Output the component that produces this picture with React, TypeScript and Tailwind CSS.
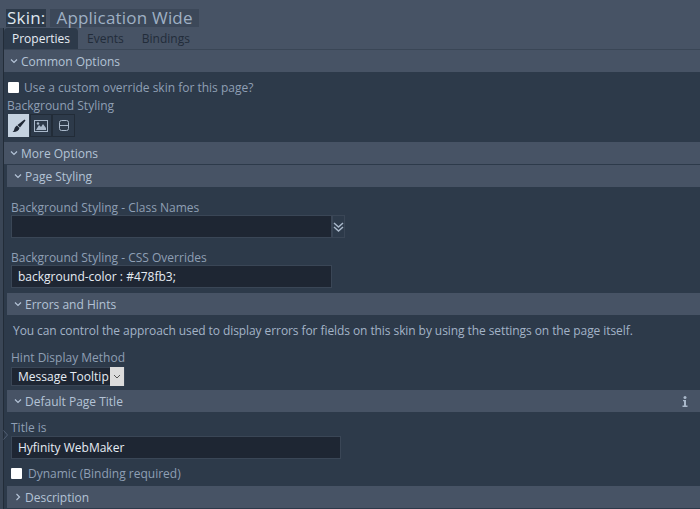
import React from "react";

const font = { fontFamily: '"Open Sans", sans-serif' };

function Chevron({ open = true }: { open?: boolean }) {
  return (
    <svg width="8" height="8" viewBox="0 0 8 8" fill="none" stroke="#b4c3d6" strokeWidth="1.2" className="shrink-0">
      {open ? <path d="M1 2.5 L4 5.5 L7 2.5" /> : <path d="M2.5 1 L5.5 4 L2.5 7" />}
    </svg>
  );
}

function SectionHead({ title, open = true, indent = false, children }: { title: string; open?: boolean; indent?: boolean; children?: React.ReactNode }) {
  return (
    <div className={`flex h-[22px] items-center gap-[3px] bg-[#475365] text-[12px] text-[#b4c3d6] ${indent ? "pl-[7px]" : "pl-[6px]"}`}>
      <Chevron open={open} />
      <span className="relative top-[1px]">{title}</span>
      {children}
    </div>
  );
}

function Label({ children, shift = false }: { children: React.ReactNode; shift?: boolean }) {
  return <div className={`h-[16px] text-[12px] leading-[16px] text-[#8f9fb4] ${shift ? "pt-[1px]" : ""}`}>{children}</div>;
}

export default function App() {
  return (
    <div className="relative flex h-[509px] w-[700px] overflow-hidden bg-[#2d3a4a]" style={font}>
      <div className="flex w-[4px] shrink-0 flex-col">
        <div className="h-[28px] bg-[#475365]" />
        <div className="flex-1 border-r border-[#222c38] bg-[#3a4656]" />
      </div>
      <div className="min-w-0 flex-1">
        {/* header */}
        <div className="h-[50px] border-b border-[#3a4656] bg-[#475365]">
          <div className="flex h-[28px] items-end pb-[1px]">
            <span className="ml-[2px] h-[18px] bg-[#2d3a4a] px-[1px] text-[17px] leading-[18px] tracking-[0.2px] text-[#dfe6ee]">Skin:</span>
            <span className="ml-[4px] h-[18px] bg-[#3c4859] px-[6px] text-[17px] leading-[18px] tracking-[0.2px] text-[#9fb0c4]">Application Wide</span>
          </div>
          <div className="flex h-[21px] text-[12px]">
            <div className="flex w-[74px] items-center justify-center rounded-t-[4px] bg-[#2d3a4a] text-[#e6ecf3]">Properties</div>
            <div className="ml-[9px] flex items-center text-[#222c3a]">Events</div>
            <div className="ml-[18px] flex items-center text-[#222c3a]">Bindings</div>
          </div>
        </div>

        <SectionHead title="Common Options" />
        <div className="h-[70px] bg-[#2d3a4a] pl-[3px] pt-[9px]">
          <label className="flex h-[13px] items-center gap-[5px] pl-[1px] text-[12px] text-[#8f9fb4]">
            <span className="h-[11px] w-[11px] rounded-[1px] bg-white" />
            Use a custom override skin for this page?
          </label>
          <div className="mt-[4px]"><Label>Background Styling</Label></div>
          <div className="flex pl-[1px]">
            <div className="flex h-[23px] w-[21px] items-center justify-center bg-[#c5d2e0]">
              <svg width="14" height="14" viewBox="0 0 14 14" fill="#1f2835"><path d="M12.5 0.5 L13.5 1.5 L8 8.5 L5.5 6 Z" /><path d="M5 6.5 L7.5 9 C7 12 3.5 13.5 0.5 13 C2 12 2 11 2.5 9.5 C3 8 4 7 5 6.5 Z" /></svg>
            </div>
            <div className="ml-[1px] flex h-[23px] w-[22px] items-center justify-center border border-[#222c38] bg-[#2d3a4a]">
              <svg width="14" height="12" viewBox="0 0 14 12" fill="#a9b8ca"><path fillRule="evenodd" d="M0 0 H14 V12 H0 Z M1 1 V11 H13 V1 Z" /><path d="M2 10 L5 5 L7 7 L9 4 L12 8 V10 Z" /><circle cx="4" cy="3.5" r="1.2" /></svg>
            </div>
            <div className="flex h-[23px] w-[23px] items-center justify-center border border-[#222c38] bg-[#2d3a4a]">
              <svg width="10" height="11" viewBox="0 0 10 11" fill="none" stroke="#a9b8ca"><rect x="0.5" y="0.5" width="9" height="10" rx="2" /><path d="M0.5 5.5 H9.5" /></svg>
            </div>
          </div>
        </div>

        <SectionHead title="More Options" />
        <div className="border-l-[3px] border-[#2d3a4a] pt-[1px]">
          <SectionHead title="Page Styling" indent />
          <div className="h-[106px] pl-[4px]">
            <div className="pt-[12px]"><Label shift>Background Styling - Class Names</Label></div>
            <div className="flex h-[23px]">
              <div className="w-[321px] border border-[#3a4656] bg-[#1e2633]" />
              <div className="flex w-[13px] items-center justify-center border border-[#3a4656]">
                <svg width="11" height="10" viewBox="0 0 11 10" fill="none" stroke="#a9b8ca" strokeWidth="1.5"><path d="M1 1 L5.5 5 L10 1 M1 5 L5.5 9 L10 5" /></svg>
              </div>
            </div>
            <div className="mt-[11px]"><Label shift>Background Styling - CSS Overrides</Label></div>
            <div className="flex h-[23px] w-[321px] items-center border border-[#3a4656] bg-[#1e2633] pl-[6px] text-[12px] text-[#e6ecf3]">background-color : #478fb3;</div>
          </div>
          <SectionHead title="Errors and Hints" indent />
          <div className="h-[75px] pl-[6px] pt-[8px] text-[12px] leading-[16px] text-[#a3b3c7]">
            <div className="tracking-[-0.08px]">You can control the approach used to display errors for fields on this skin by using the settings on the page itself.</div>
            <div className="-ml-[2px] mt-[11px]"><Label>Hint Display Method</Label></div>
            <div className="-ml-[2px] mt-[1px] flex h-[19px] w-[114px] items-center border border-[#3a4656] bg-[#1e2633] pl-[6px] text-[#e6ecf3]">
              <span className="w-[92px] overflow-hidden whitespace-nowrap">Message Tooltip</span>
              <span className="flex h-[19px] w-[14px] items-center justify-center bg-[#dcdcdc]"><svg width="8" height="6" viewBox="0 0 8 6" fill="none" stroke="#555"><path d="M1 1 L4 4 L7 1" /></svg></span>
            </div>
          </div>
          <SectionHead title="Default Page Title" indent>
            <svg className="ml-auto mr-[12px]" width="6" height="11" viewBox="0 0 6 11" fill="#a9b8ca"><circle cx="3" cy="1.5" r="1.5" /><path d="M1 4 H4 V9.5 H5.5 V11 H0.5 V9.5 H2 V5.2 H1 Z" /></svg>
          </SectionHead>
          <div className="h-[74px] pl-[4px]">
            <div className="pt-[8px]"><Label>Title is</Label></div>
            <div className="flex h-[23px] w-[330px] items-center border border-[#3a4656] bg-[#1e2633] pl-[6px] text-[12px] text-[#e6ecf3]">Hyfinity WebMaker</div>
            <label className="mt-[8px] flex h-[13px] items-center gap-[6px] text-[12px] text-[#8f9fb4]">
              <span className="h-[11px] w-[11px] rounded-[1px] bg-white" />
              Dynamic (Binding required)
            </label>
          </div>
          <SectionHead title="Description" open={false} indent />
        </div>
      </div>
      <svg className="absolute left-[3px] top-[430px]" width="5" height="10" viewBox="0 0 5 10" fill="none" stroke="#526075"><path d="M0.5 0.5 L4.5 5 L0.5 9.5" /></svg>
    </div>
  );
}
